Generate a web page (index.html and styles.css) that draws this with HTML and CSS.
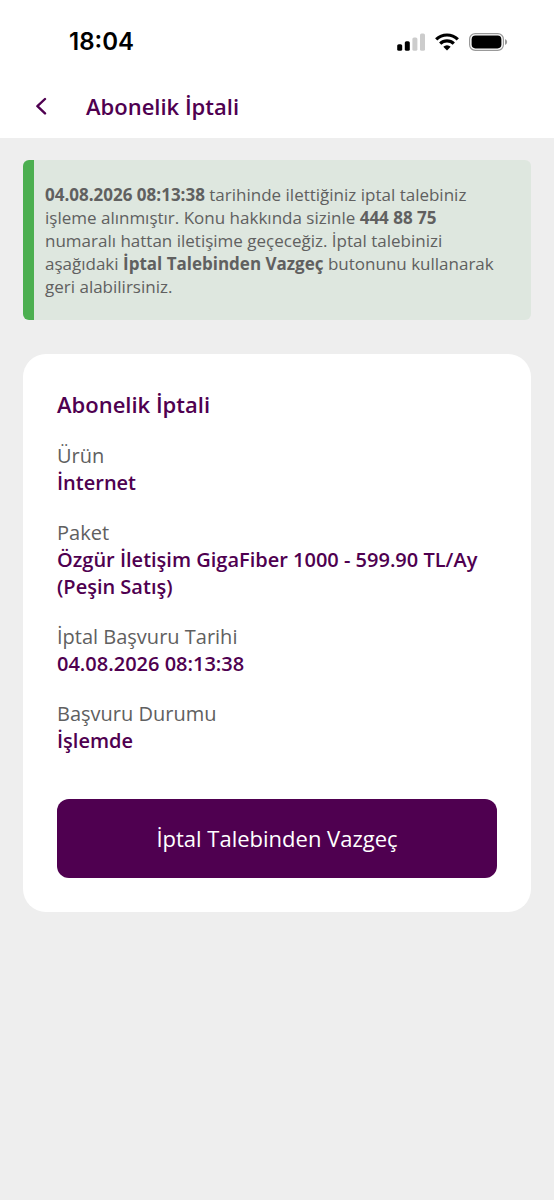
FILE: index.html
```html
<!DOCTYPE html>
<html lang="tr">
<head>
<meta charset="utf-8">
<meta name="viewport" content="width=device-width, initial-scale=1">
<title>Abonelik İptali</title>
<link rel="stylesheet" href="styles.css">
</head>
<body>
<header class="top">
  <div class="status">
    <time class="clock">18:04</time>
    <div class="status-icons">
      <svg width="28" height="18" viewBox="0 0 28 18" aria-hidden="true">
        <rect x="0.2" y="11.2" width="5" height="6.6" rx="1.6" fill="#000"/>
        <rect x="7.8" y="8.2" width="5" height="9.6" rx="1.6" fill="#000"/>
        <rect x="15.4" y="4.4" width="5" height="13.4" rx="1.6" fill="#ccc"/>
        <rect x="23" y="0.6" width="5" height="17.2" rx="1.6" fill="#ccc"/>
      </svg>
      <svg width="24" height="18" viewBox="0 0 24 18" aria-hidden="true" fill="none" stroke="#000" stroke-width="3.2">
        <path d="M1.2 6.4a15.4 15.4 0 0 1 21.6 0"/>
        <path d="M5.2 10.7a9.7 9.7 0 0 1 13.6 0"/>
        <path d="M12 17.5l-3.7-3.8a5.3 5.3 0 0 1 7.4 0z" fill="#000" stroke="none"/>
      </svg>
      <svg width="39" height="18" viewBox="0 0 39 18" aria-hidden="true">
        <rect x="0.6" y="0.6" width="33.8" height="16.8" rx="5.6" fill="none" stroke="#999" stroke-width="1.2"/>
        <rect x="2.6" y="2.6" width="29.8" height="12.8" rx="3.8" fill="#000"/>
        <path d="M36 6v6q2.2-.8 2.2-3T36 6z" fill="#999"/>
      </svg>
    </div>
  </div>
  <div class="nav">
    <button class="back" type="button" aria-label="Geri">
      <svg width="12" height="18" viewBox="0 0 12 18" fill="none" stroke="currentColor" stroke-width="2.4" stroke-linecap="round" stroke-linejoin="round" aria-hidden="true"><path d="M10 2L2.4 9.2l7.6 7.2"/></svg>
    </button>
    <h1 class="title">Abonelik İptali</h1>
  </div>
</header>
<main class="content">
  <p class="notice"><strong>04.08.2026 08:13:38</strong> tarihinde ilettiğiniz iptal talebiniz işleme alınmıştır. Konu hakkında sizinle <strong>444 88 75</strong> numaralı hattan iletişime geçeceğiz. İptal talebinizi aşağıdaki <strong>İptal Talebinden Vazgeç</strong> butonunu kullanarak geri alabilirsiniz.</p>
  <section class="card">
    <h2 class="title">Abonelik İptali</h2>
    <dl class="details">
      <div><dt>Ürün</dt><dd>İnternet</dd></div>
      <div><dt>Paket</dt><dd>Özgür İletişim GigaFiber 1000 - 599.90 TL/Ay (Peşin Satış)</dd></div>
      <div><dt>İptal Başvuru Tarihi</dt><dd>04.08.2026 08:13:38</dd></div>
      <div><dt>Başvuru Durumu</dt><dd>İşlemde</dd></div>
    </dl>
    <button class="cancel" type="button">İptal Talebinden Vazgeç</button>
  </section>
</main>
</body>
</html>
```
FILE: styles.css
```css
* { box-sizing: border-box; }
body {
  margin: 0;
  min-height: 100vh;
  background: #eee;
  color: #606060;
  font-family: "Open Sans", sans-serif;
}
.top { background: #fff; padding-bottom: 16px; }
.status {
  display: flex;
  align-items: center;
  justify-content: space-between;
  padding: 27px 46px 0 69px;
}
.clock {
  color: #000;
  font: 600 24px/30px Inter, sans-serif;
}
.status-icons { display: flex; align-items: center; gap: 10px; }
.status-icons svg { display: block; }
.nav {
  display: flex;
  align-items: center;
  gap: 22px;
  padding: 33px 22px 0;
}
.back {
  display: grid;
  place-items: center;
  width: 42px;
  height: 32px;
  padding: 0 4px 0 0;
  border: 0;
  background: none;
  color: #4f0050;
}
.title {
  margin: 0;
  color: #4f0050;
  font-size: 22px;
  font-weight: 600;
  line-height: 32px;
}
.content { padding: 22px 23px; }
.notice {
  margin: 0 0 34px;
  padding: 23px 32px 22px 11px;
  border-left: 11px solid #4caf50;
  border-radius: 6px;
  background: #dee7df;
  font-size: 17px;
  line-height: 23px;
}
.card {
  padding: 34px;
  border-radius: 23px;
  background: #fff;
}
.details {
  display: grid;
  gap: 23px;
  margin: 22px 0 45px;
  font-size: 20px;
  line-height: 27px;
}
.details dd {
  margin: 0;
  color: #4f0050;
  font-weight: 600;
}
.cancel {
  display: block;
  width: 100%;
  padding: 24px 16px;
  border: 0;
  border-radius: 12px;
  background: #4f0050;
  color: #fff;
  font: 400 22px/31px "Open Sans", sans-serif;
}
```
